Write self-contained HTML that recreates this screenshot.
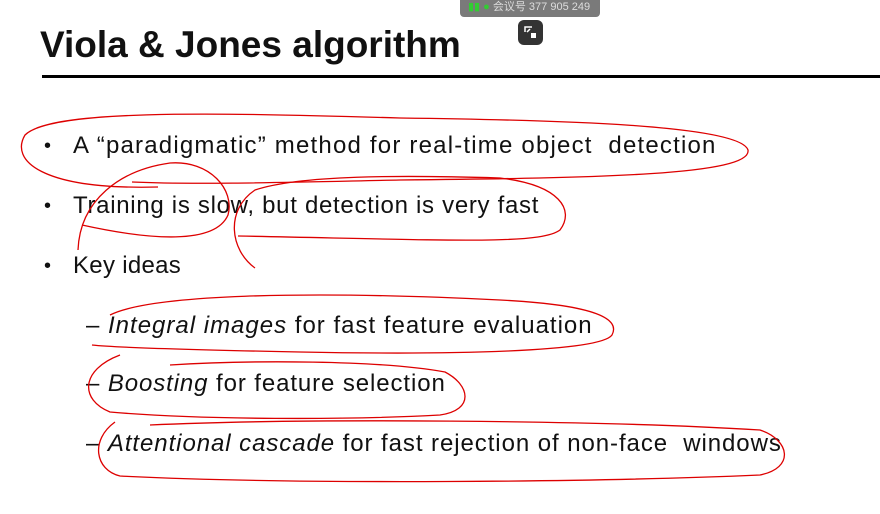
<!DOCTYPE html>
<html><head><meta charset="utf-8"><style>
body{margin:0;width:880px;height:514px;background:#fff;position:relative;overflow:hidden;font-family:"Liberation Sans",sans-serif;color:#111}
.t{position:absolute;left:40px;top:24px;font-size:37px;font-weight:bold;letter-spacing:0}
.rule{position:absolute;left:42px;top:75px;width:838px;height:3px;background:#000}
.l{position:absolute;font-size:24px;white-space:nowrap}
.b{position:absolute;left:44px;font-size:20px}
.bar{position:absolute;left:460px;top:0;width:140px;height:17px;background:#7a7a7a;border-radius:0 0 4px 4px;color:#ddd;font-size:11px;line-height:15px;font-family:"Liberation Sans","Noto Sans CJK SC",sans-serif}
.ic{position:absolute;left:518px;top:20px;width:25px;height:25px;background:#333;border-radius:6px}
</style></head><body>
<div class="bar"><span style="color:#3c3;margin-left:8px">▮▮ ●</span> 会议号 377 905 249</div>
<div class="ic"><svg width="25" height="25"><path d="M7 12V7h7M12 9l-3 3" stroke="#fff" stroke-width="1.5" fill="none"/><rect x="13" y="13" width="5" height="5" fill="#fff"/></svg></div>
<div class="t">Viola &amp; Jones algorithm</div>
<div class="rule"></div>
<div class="b" style="top:135px">•</div><div class="l" style="left:73px;top:132px;letter-spacing:1.2px">A “paradigmatic” method for real-time object &nbsp;detection</div>
<div class="b" style="top:195px">•</div><div class="l" style="left:73px;top:192px;letter-spacing:0.7px">Training is slow, but detection is very fast</div>
<div class="b" style="top:255px">•</div><div class="l" style="left:73px;top:252px;letter-spacing:0.3px">Key ideas</div>
<div class="l" style="left:86px;top:312px;letter-spacing:1px">– <i>Integral images</i> for fast feature evaluation</div>
<div class="l" style="left:86px;top:370px;letter-spacing:0.9px">– <i>Boosting</i> for feature selection</div>
<div class="l" style="left:86px;top:430px;letter-spacing:0.93px">– <i>Attentional cascade</i> for fast rejection of non-face &nbsp;windows</div>
<svg width="880" height="514" style="position:absolute;left:0;top:0" fill="none" stroke="#d00" stroke-width="1.3">
<path d="M158 187C40 190 10 160 25 135C50 110 200 112 400 118C560 120 740 125 748 150C752 175 600 178 400 180C300 182 200 185 132 182"/>
<path d="M78 250C80 200 120 170 170 163C210 160 235 190 228 215C215 245 150 240 82 225"/>
<path d="M255 268C230 250 225 210 255 190C300 175 400 175 500 178C560 185 575 210 560 230C540 245 450 240 238 236"/>
<path d="M110 315C150 295 300 290 500 300C600 305 620 320 612 335C600 352 450 355 300 352C200 350 120 348 92 345"/>
<path d="M120 355C80 370 80 400 110 412C200 420 350 420 440 415C475 410 470 385 445 372C380 360 250 360 170 365"/>
<path d="M115 422C90 440 95 470 120 476C300 485 600 482 760 475C795 468 790 440 760 430C600 420 300 418 150 425"/>
</svg>
</body></html>
